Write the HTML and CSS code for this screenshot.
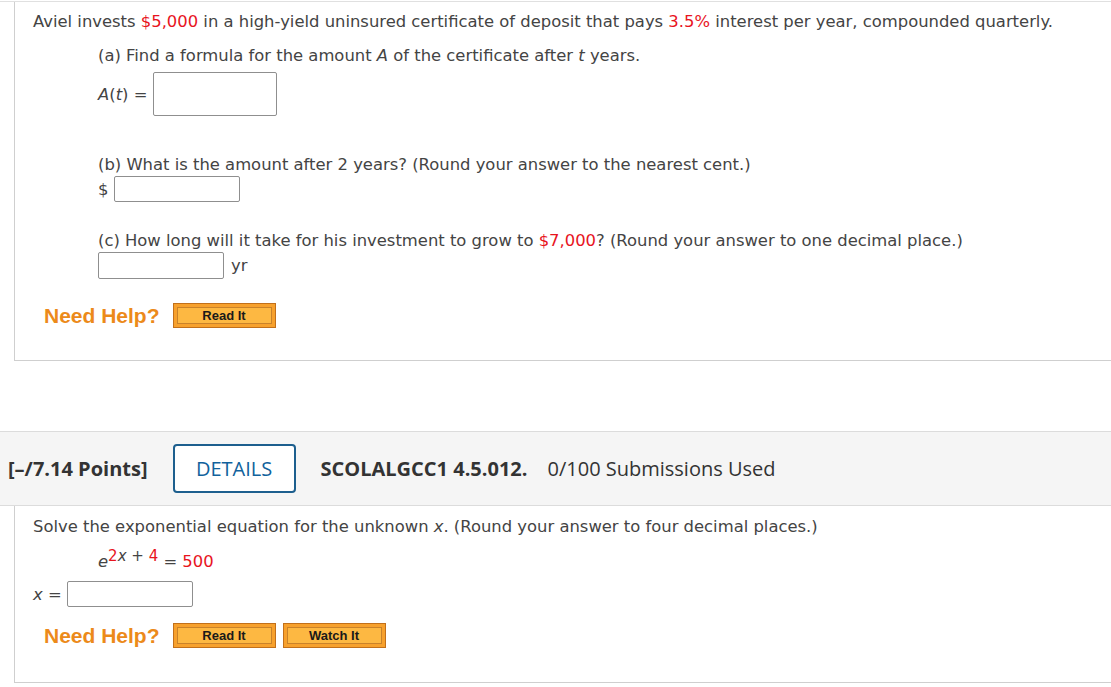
FILE: index.html
```html
<!DOCTYPE html>
<html>
<head>
<meta charset="utf-8">
<link rel="stylesheet" href="styles.css">
</head>
<body>
<div class="top-rule"></div>
<section class="question q1">
  <p class="stem">Aviel invests <span class="red">$5,000</span> in a high-yield uninsured certificate of deposit that pays <span class="red">3.5%</span> interest per year, compounded quarterly.</p>
  <div class="part">
    <p class="part-a">(a) Find a formula for the amount <i>A</i> of the certificate after <i>t</i> years.</p>
    <div class="row row-a"><span class="label"><i>A</i>(<i>t</i>) =</span><span class="box box-big"></span></div>
    <p class="part-b">(b) What is the amount after 2 years? (Round your answer to the nearest cent.)</p>
    <div class="row row-b"><span class="label">$</span><span class="box"></span></div>
    <p class="part-c">(c) How long will it take for his investment to grow to <span class="red">$7,000</span>? (Round your answer to one decimal place.)</p>
    <div class="row row-c"><span class="box"></span><span class="unit">yr</span></div>
  </div>
  <div class="help">
    <span class="need">Need Help?</span>
    <span class="btn"><span class="btn-in">Read It</span></span>
  </div>
</section>

<header class="qhead">
  <span class="points">[–/7.14 Points]</span>
  <span class="details">DETAILS</span>
  <span class="code">SCOLALGCC1 4.5.012.</span>
  <span class="subs">0/100 Submissions Used</span>
</header>

<section class="question q2">
  <p class="stem">Solve the exponential equation for the unknown <i>x</i>. (Round your answer to four decimal places.)</p>
  <p class="eq"><i>e</i><sup><span class="red">2</span><i>x</i> + <span class="red">4</span></sup> = <span class="red">500</span></p>
  <div class="row row-x"><span class="label"><i>x</i> =</span><span class="box"></span></div>
  <div class="help">
    <span class="need">Need Help?</span>
    <span class="btn"><span class="btn-in">Read It</span></span>
    <span class="btn"><span class="btn-in">Watch It</span></span>
  </div>
</section>
</body>
</html>
```

FILE: styles.css
```css
html, body {
  margin: 0;
  padding: 0;
  background: #fff;
}
body {
  font-family: "DejaVu Sans", Verdana, sans-serif;
  font-size: 16.4px;
  color: #444;
  width: 1111px;
  overflow: hidden;
}
p { margin: 0; }
.red { color: #e8141e; }
i { font-style: italic; }

.top-rule {
  margin-top: 1px;
  height: 1px;
  background: #e0e0e0;
}

.question {
  margin-left: 14px;
  border-left: 1px solid #cfcfcf;
  border-bottom: 1px solid #cfcfcf;
  padding-left: 18px;
}
.q1 {
  padding-top: 10px;
  padding-bottom: 32px;
}
.stem { line-height: 20px; }
.part { padding-left: 65px; }
.part-a { margin-top: 14px; line-height: 20px; }
.part-b { margin-top: 39px; line-height: 20px; }
.part-c { margin-top: 29px; line-height: 20px; }

.row {
  display: flex;
  align-items: center;
}
.row-a { margin-top: 6px; }
.row-b { margin-top: 1px; }
.row-c { margin-top: 1px; }
.label { margin-right: 6px; }
.row-b .label { margin-right: 6px; }
.box {
  display: inline-block;
  width: 124px;
  height: 24px;
  border: 1px solid #8f8f8f;
  border-radius: 2px;
  background: #fff;
}
.row-c .box { height: 25px; }
.box-big { height: 42px; width: 122px; }
.unit { margin-left: 7px; }

.help {
  display: flex;
  align-items: center;
  margin-top: 24px;
  padding-left: 11px;
  gap: 7px;
}
.need {
  font-family: "Liberation Sans", Arial, sans-serif;
  font-weight: bold;
  font-size: 21px;
  color: #ec8a1a;
  margin-right: 6px;
}
.btn {
  display: inline-flex;
  width: 103px;
  height: 25px;
  box-sizing: border-box;
  border: 1px solid #c2701a;
  background: #f7a12d;
  padding: 3px;
}
.btn-in {
  flex: 1;
  display: flex;
  align-items: center;
  justify-content: center;
  border: 1px solid #c9822a;
  background: #fdb842;
  font-family: "Liberation Sans", Arial, sans-serif;
  font-weight: bold;
  font-size: 13px;
  color: #1a1a1a;
}

.qhead {
  margin-top: 70px;
  display: flex;
  align-items: center;
  height: 73px;
  background: #f5f5f5;
  border-top: 1px solid #dcdcdc;
  border-bottom: 1px solid #dcdcdc;
  padding-left: 8px;
  font-family: "Open Sans", sans-serif;
  font-size: 20px;
  color: #333;
}
.points { font-weight: bold; }
.details {
  margin-left: 25px;
  width: 123px;
  height: 49px;
  box-sizing: border-box;
  border: 2px solid #1d5f8e;
  border-radius: 4px;
  display: flex;
  align-items: center;
  justify-content: center;
  color: #11629c;
  background: #fff;
}
.code { margin-left: 25px; font-weight: bold; }
.subs { margin-left: 20px; }

.q2 {
  padding-top: 11px;
  padding-bottom: 34px;
}
.eq {
  margin-top: 15px;
  padding-left: 65px;
  line-height: 20px;
}
.eq sup {
  font-size: 15px;
  vertical-align: 6px;
  line-height: 0;
}
.row-x { margin-top: 9px; }
.row-x .label { margin-right: 5px; }
.q2 .help { margin-top: 16px; }
```
